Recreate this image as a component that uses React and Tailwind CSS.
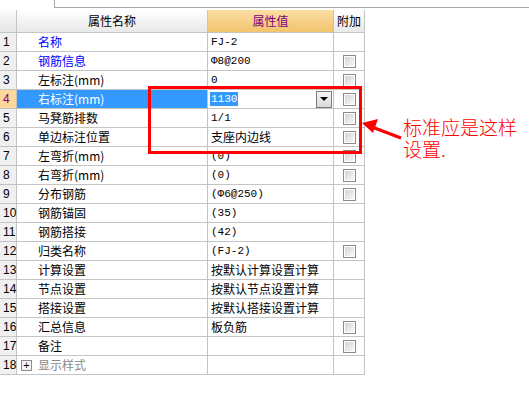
const rows = [
  { n: "1", name: "名称", blue: true, value: "FJ-2", mono: true, box: false },
  { n: "2", name: "钢筋信息", blue: true, value: "Φ8@200", mono: true, box: true },
  { n: "3", name: "左标注(mm)", value: "0", mono: true, box: true },
  { n: "4", name: "右标注(mm)", value: "1130", mono: true, box: true, selected: true },
  { n: "5", name: "马凳筋排数", value: "1/1", mono: true, box: true },
  { n: "6", name: "单边标注位置", value: "支座内边线", box: true },
  { n: "7", name: "左弯折(mm)", value: "(0)", mono: true, box: true },
  { n: "8", name: "右弯折(mm)", value: "(0)", mono: true, box: true },
  { n: "9", name: "分布钢筋", value: "(Φ6@250)", mono: true, box: true },
  { n: "10", name: "钢筋锚固", value: "(35)", mono: true, box: false },
  { n: "11", name: "钢筋搭接", value: "(42)", mono: true, box: false },
  { n: "12", name: "归类名称", value: "(FJ-2)", mono: true, box: true },
  { n: "13", name: "计算设置", value: "按默认计算设置计算", box: false },
  { n: "14", name: "节点设置", value: "按默认节点设置计算", box: false },
  { n: "15", name: "搭接设置", value: "按默认搭接设置计算", box: false },
  { n: "16", name: "汇总信息", value: "板负筋", box: true },
  { n: "17", name: "备注", value: "", box: true },
  { n: "18", name: "显示样式", value: "", box: false, group: true },
];

function Check() {
  return (
    <div className="w-[13px] h-[13px] border border-[#8a8a8a] bg-white p-px">
      <div className="w-full h-full bg-gradient-to-br from-[#d4d4d4] to-[#f8f8f8]" />
    </div>
  );
}

function Row({ r }) {
  const sel = r.selected;
  return (
    <div className="flex h-[19px]">
      <div
        className={
          "w-[17px] border-r border-b border-[#c4c4c4] pl-[3px] flex items-center text-[12px] font-['Liberation_Sans',sans-serif] " +
          (sel ? "bg-[#fdd79b] text-[#800080]" : "bg-[#f0f0f0] text-black")
        }
      >
        {r.n}
      </div>
      <div
        className={
          "w-[191px] border-r border-b border-[#c4c4c4] flex items-center text-[12px] " +
          (sel ? "bg-[#3399ff] text-white pl-[21px]" : r.blue ? "text-[#0000ff] pl-[21px]" : r.group ? "text-[#8a8a8a] pl-[4px]" : "text-black pl-[21px]")
        }
      >
        {r.group && (
          <span className="w-[11px] h-[11px] border border-[#8a8a8a] bg-[#f4f4f4] mr-[6px] flex items-center justify-center text-black text-[11px] leading-none font-['Liberation_Sans',sans-serif]">
            +
          </span>
        )}
        {r.name}
      </div>
      <div className="w-[126px] border-r border-b border-[#c4c4c4] flex items-center">
        {sel ? (
          <div className="flex items-center w-full h-full pl-[2px] pr-[1px]">
            <span className="bg-[#3399ff] text-white px-px text-[11px] leading-[14px] font-['Liberation_Mono',monospace]">
              {r.value}
            </span>
            <div className="ml-auto w-[16px] h-[17px] border border-[#7a7a7a] bg-gradient-to-b from-[#f6f6f6] to-[#dadada] flex items-center justify-center">
              <div className="w-0 h-0 border-l-[4px] border-r-[4px] border-t-[4px] border-l-transparent border-r-transparent border-t-black" />
            </div>
          </div>
        ) : (
          <span
            className={
              "pl-[3px] " +
              (r.mono ? "text-[11px] font-['Liberation_Mono','Noto_Sans_CJK_SC',monospace]" : "text-[12px]")
            }
          >
            {r.value}
          </span>
        )}
      </div>
      <div className="w-[31px] border-r border-b border-[#c4c4c4] flex items-center pl-[9px]">
        {r.box && <Check />}
      </div>
    </div>
  );
}

export default function App() {
  return (
    <div className="relative w-[529px] h-[403px] bg-white overflow-hidden font-['Noto_Sans_CJK_SC',sans-serif] text-black">
      <div className="ml-[54px] h-[8px] border-l border-b border-[#a8a8a8]" />

      <div className="mt-[2px] w-[365px]">
        <div className="flex h-[23px] text-[12px]">
          <div className="w-[17px] border-r border-b border-[#c4c4c4] bg-gradient-to-b from-[#fbfbfb] to-[#e6e6e6]" />
          <div className="w-[191px] border-r border-b border-[#c4c4c4] bg-gradient-to-b from-[#ffffff] to-[#e9e9e9] flex items-center justify-center">
            属性名称
          </div>
          <div className="w-[126px] border-r border-b border-[#c4c4c4] bg-gradient-to-b from-[#fbdea3] to-[#f2c46c] flex items-center justify-center text-[#800080]">
            属性值
          </div>
          <div className="w-[31px] border-r border-b border-[#c4c4c4] bg-gradient-to-b from-[#ffffff] to-[#e9e9e9] flex items-center justify-center">
            附加
          </div>
        </div>
        {rows.map((r) => (
          <Row key={r.n} r={r} />
        ))}
      </div>

      {/* annotation */}
      <div className="absolute left-[148px] top-[86px] w-[214px] h-[68px] border-[3px] border-[#ff0000]" />
      <svg className="absolute left-0 top-0" width="529" height="403">
        <line x1="401" y1="138" x2="372" y2="127" stroke="#ff0000" strokeWidth="3" />
        <polygon points="362,123 378,119 373,133" fill="#ff0000" />
      </svg>
      <div className="absolute left-[403px] top-[116px] flex flex-col gap-[1px] text-[19px] leading-[21px] text-[#ff0000] font-['Noto_Sans_CJK_SC',sans-serif] font-light">
        <div>标准应是这样</div>
        <div>设置.</div>
      </div>
    </div>
  );
}
